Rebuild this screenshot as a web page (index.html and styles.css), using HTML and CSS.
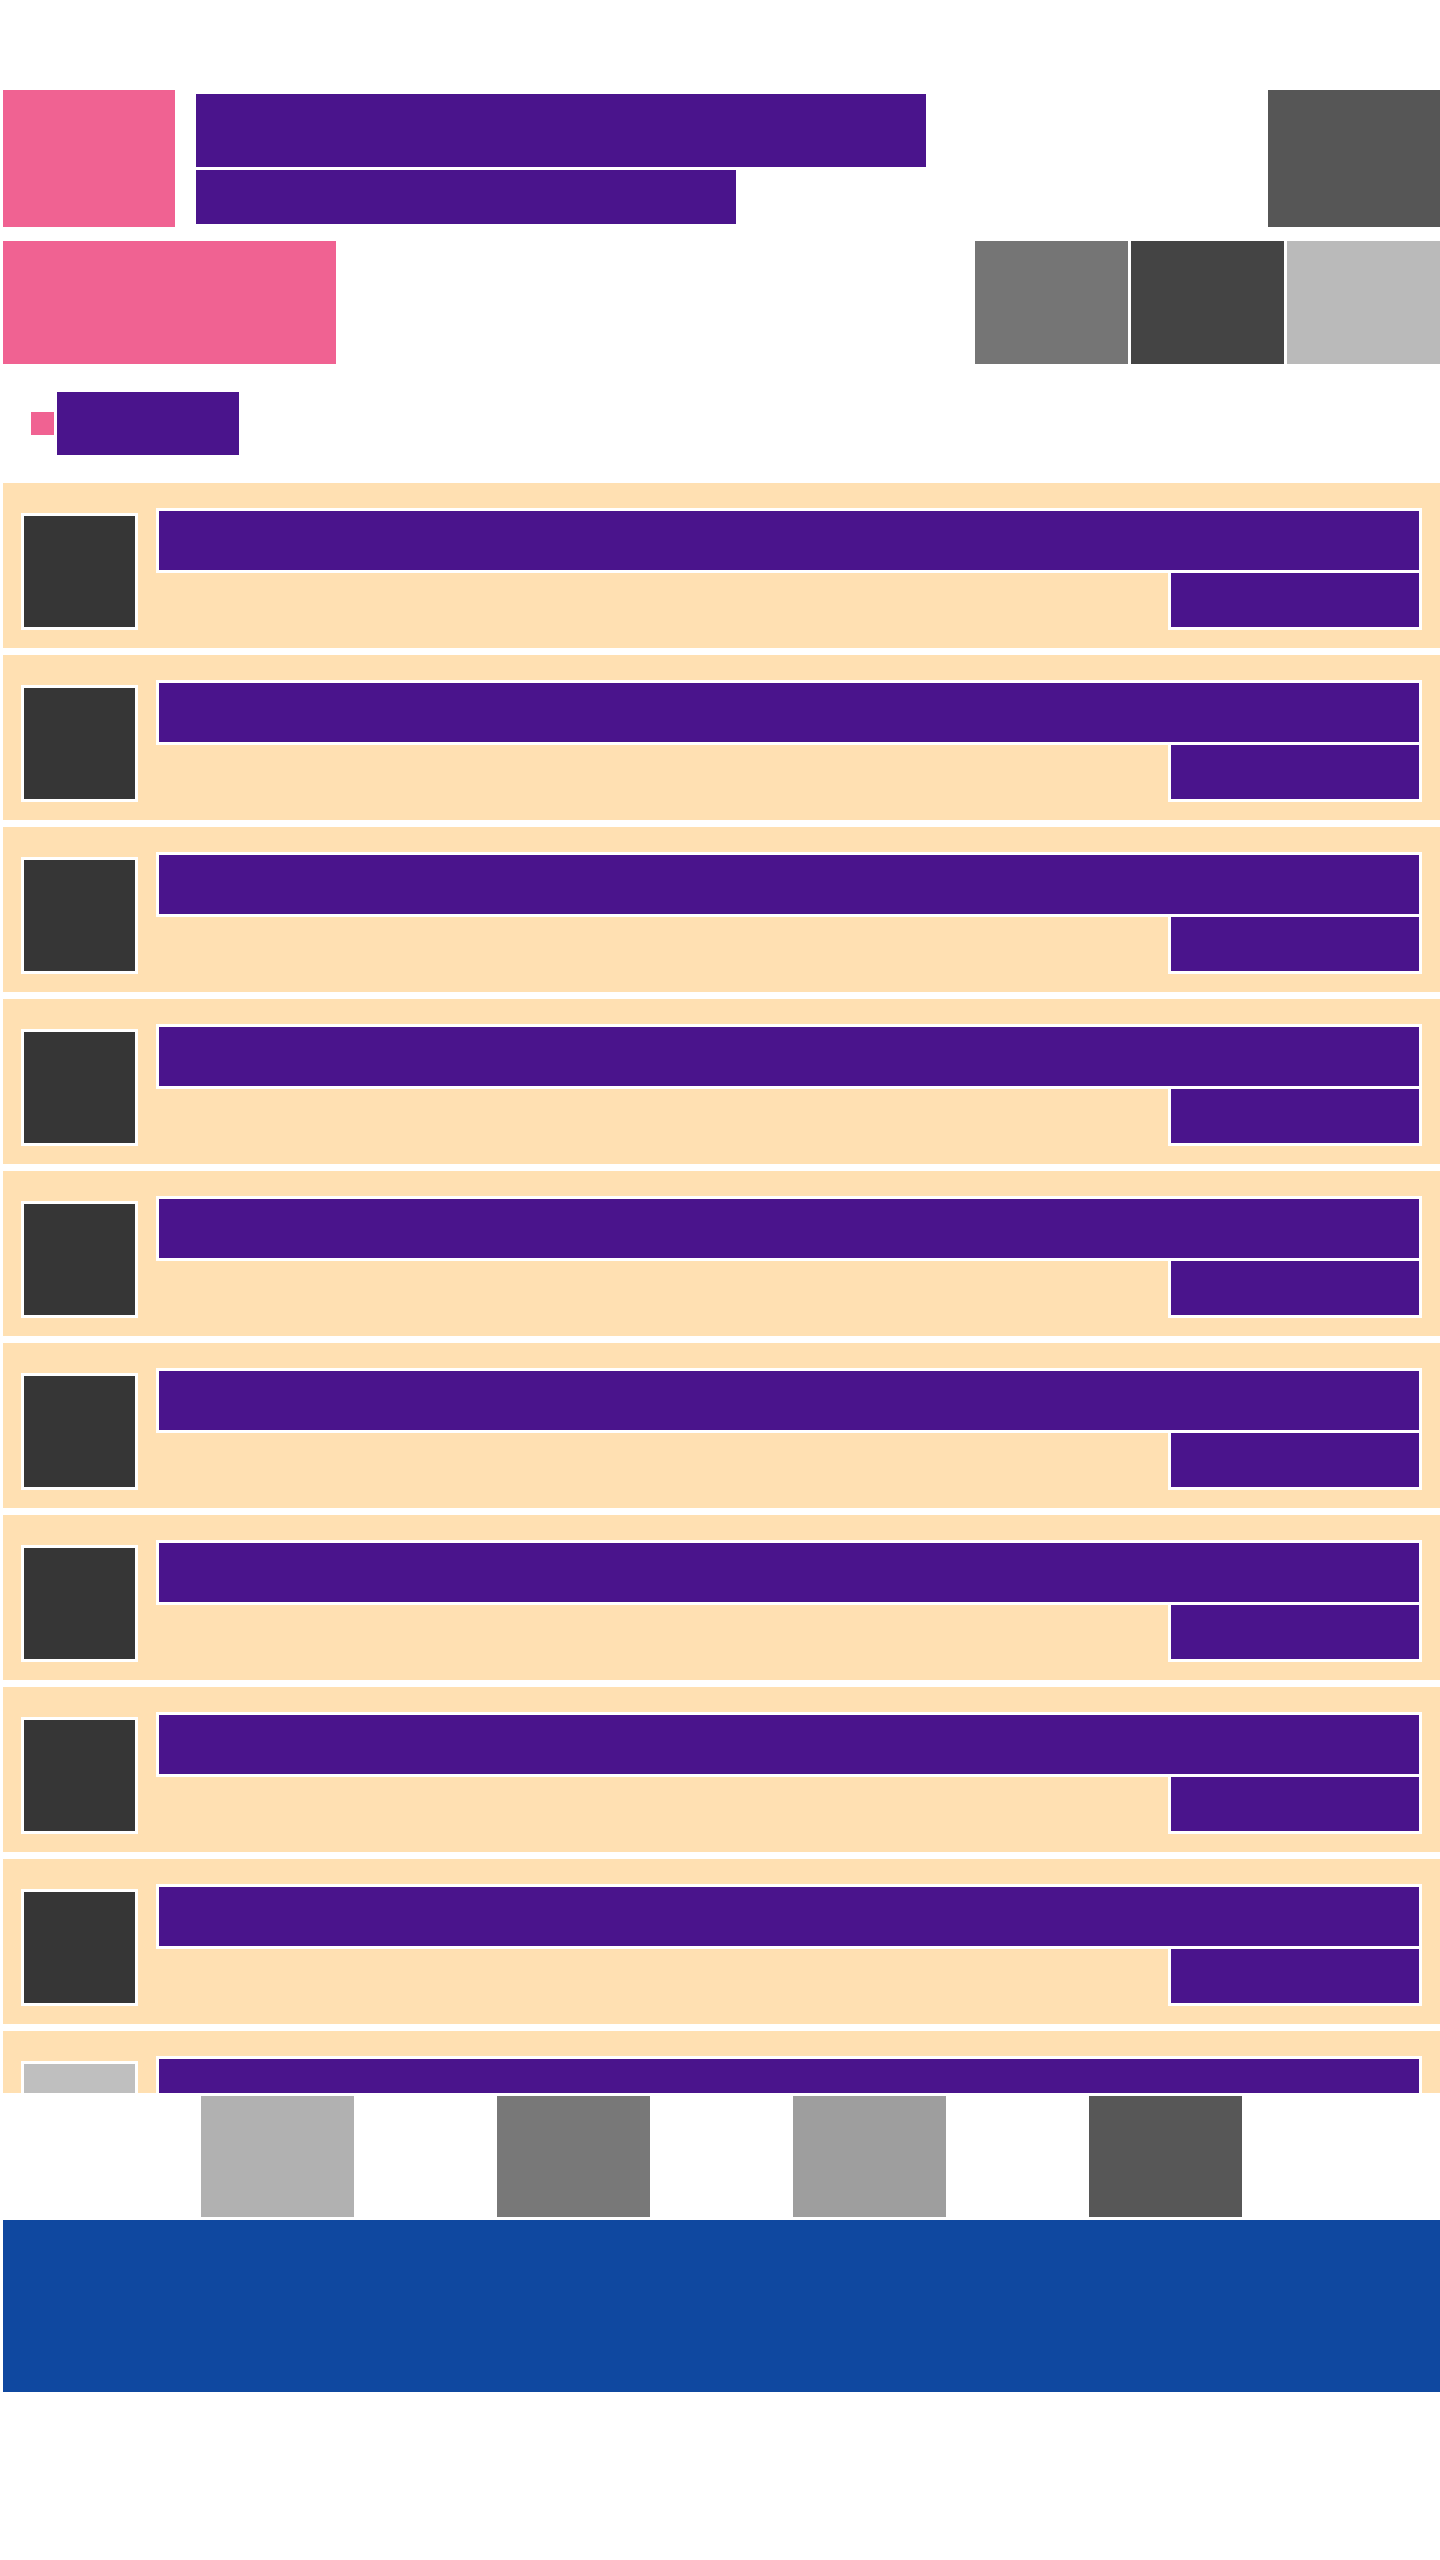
FILE: index.html
```html
<!DOCTYPE html>
<html lang="en">
<head>
  <meta charset="UTF-8">
  <meta name="viewport" content="width=device-width, initial-scale=1.0">
  <title>List</title>
  <link rel="stylesheet" href="styles.css">
</head>
<body>
  <div class="page">
    <header class="top">
      <div class="brand-row">
        <div class="logo"></div>
        <div class="titles">
          <div class="title"></div>
          <div class="subtitle"></div>
        </div>
        <div class="avatar"></div>
      </div>
      <div class="tool-row">
        <div class="banner"></div>
        <div class="actions">
          <div class="btn btn-mid"></div>
          <div class="btn btn-dark"></div>
          <div class="btn btn-light"></div>
        </div>
      </div>
    </header>

    <div class="section-head">
      <span class="dot"></span>
      <span class="label"></span>
    </div>

    <div class="list">
      <div class="card"><div class="thumb"></div><div class="card-body"><div class="card-title"></div><div class="card-meta"></div></div></div>
      <div class="card"><div class="thumb"></div><div class="card-body"><div class="card-title"></div><div class="card-meta"></div></div></div>
      <div class="card"><div class="thumb"></div><div class="card-body"><div class="card-title"></div><div class="card-meta"></div></div></div>
      <div class="card"><div class="thumb"></div><div class="card-body"><div class="card-title"></div><div class="card-meta"></div></div></div>
      <div class="card"><div class="thumb"></div><div class="card-body"><div class="card-title"></div><div class="card-meta"></div></div></div>
      <div class="card"><div class="thumb"></div><div class="card-body"><div class="card-title"></div><div class="card-meta"></div></div></div>
      <div class="card"><div class="thumb"></div><div class="card-body"><div class="card-title"></div><div class="card-meta"></div></div></div>
      <div class="card"><div class="thumb"></div><div class="card-body"><div class="card-title"></div><div class="card-meta"></div></div></div>
      <div class="card"><div class="thumb"></div><div class="card-body"><div class="card-title"></div><div class="card-meta"></div></div></div>
      <div class="card"><div class="thumb thumb-empty"></div><div class="card-body"><div class="card-title"></div><div class="card-meta"></div></div></div>
    </div>

    <nav class="tabs">
      <div class="tab tab-1"></div>
      <div class="tab tab-2"></div>
      <div class="tab tab-3"></div>
      <div class="tab tab-4"></div>
    </nav>

    <footer class="footer"></footer>
  </div>
</body>
</html>
```

FILE: styles.css
```css
body {
  font-family: "Liberation Sans", Arial, sans-serif;
  margin: 0;
  padding: 0;
  background-color: #fff;
}

.page {
  padding: 90px 0 0 3px;
}

/* cabecera */
.brand-row {
  display: flex;
  align-items: flex-start;
  height: 137px;
}

.logo {
  width: 172px;
  height: 137px;
  background-color: #f06292;
}

.titles {
  flex: 1;
  margin-left: 21px;
  padding-top: 4px;
  display: flex;
  flex-direction: column;
  gap: 3px;
}

.title {
  width: 730px;
  height: 73px;
  background-color: #4a148c;
}

.subtitle {
  width: 540px;
  height: 54px;
  background-color: #4a148c;
}

.avatar {
  width: 172px;
  height: 137px;
  background-color: #565656;
}

.tool-row {
  margin-top: 14px;
  display: flex;
  justify-content: space-between;
  height: 123px;
}

.banner {
  width: 333px;
  height: 123px;
  background-color: #f06292;
}

.actions {
  display: flex;
  gap: 3px;
}

.btn {
  width: 153px;
  height: 123px;
}

.btn-mid { background-color: #757575; }
.btn-dark { background-color: #444; }
.btn-light { background-color: #bababa; }

/* titulo de seccion */
.section-head {
  margin-top: 28px;
  padding-left: 28px;
  height: 63px;
  display: flex;
  align-items: center;
}

.dot {
  width: 23px;
  height: 23px;
  background-color: #f06292;
}

.label {
  margin-left: 3px;
  width: 182px;
  height: 63px;
  background-color: #4a148c;
}

/* lista */
.list {
  margin-top: 28px;
  height: 1610px;
  overflow: hidden;
  display: flex;
  flex-direction: column;
  gap: 7px;
}

.card {
  flex-shrink: 0;
  height: 165px;
  box-sizing: border-box;
  padding: 28px 21px 21px 21px;
  background-color: #ffe0b2;
  display: flex;
  align-items: flex-end;
  gap: 24px;
}

.thumb {
  width: 111px;
  height: 111px;
  flex-shrink: 0;
  background-color: #363636;
  box-shadow: 0 0 0 3px #fff;
}

.thumb-empty {
  background-color: #bfbfbf;
}

.card-body {
  flex: 1;
  display: flex;
  flex-direction: column;
  align-items: flex-end;
  gap: 3px;
}

.card-title {
  align-self: stretch;
  height: 59px;
  background-color: #4a148c;
  box-shadow: 0 0 0 3px #fff;
}

.card-meta {
  width: 248px;
  height: 54px;
  background-color: #4a148c;
  box-shadow: 0 0 0 3px #fff;
}

/* barra inferior */
.tabs {
  height: 127px;
  box-sizing: border-box;
  padding-top: 3px;
  display: flex;
  justify-content: center;
  gap: 143px;
}

.tab {
  width: 153px;
  height: 121px;
}

.tab-1 { background-color: #b1b1b1; }
.tab-2 { background-color: #787878; }
.tab-3 { background-color: #9e9e9e; }
.tab-4 { background-color: #575757; }

.footer {
  height: 172px;
  background-color: #0f48a0;
}
```
